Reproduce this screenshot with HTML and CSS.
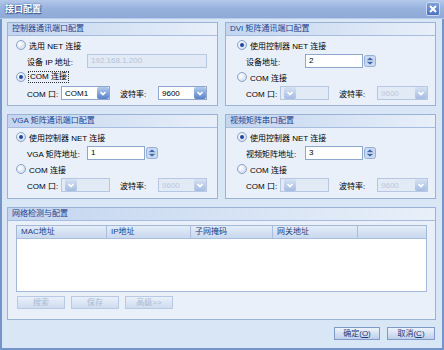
FILE: index.html
```html
<!DOCTYPE html>
<html lang="zh-CN">
<head>
    <meta charset="UTF-8">
    <title>接口配置</title>
    <link rel="stylesheet" href="styles.css">
</head>
<body>
<div class="window">
    <div class="titlebar">
        <span class="title">接口配置</span>
        <span class="close-btn">
            <svg width="12" height="12" viewBox="0 0 12 12"><path d="M3 3 L9 9 M9 3 L3 9" stroke="#fff" stroke-width="2"/></svg>
        </span>
    </div>
    <div class="frame">
        <div class="groups">
            <!-- 控制器 -->
            <div class="group">
                <div class="group-head">控制器通讯端口配置</div>
                <div class="group-body">
                    <div class="radio-row"><span class="radio"></span><span>选用 NET 连接</span></div>
                    <div class="field-row">
                        <span class="field-label">设备 IP 地址:</span>
                        <span class="textbox disabled wide">192.168.1.200</span>
                    </div>
                    <div class="radio-row"><span class="radio checked"></span><span class="focus">COM 连接</span></div>
                    <div class="field-row">
                        <span class="com-label">COM 口:</span>
                        <span class="combo">COM1<span class="drop"></span></span>
                        <span class="baud-label">波特率:</span>
                        <span class="combo">9600<span class="drop"></span></span>
                    </div>
                </div>
            </div>
            <!-- DVI -->
            <div class="group">
                <div class="group-head">DVI 矩阵通讯端口配置</div>
                <div class="group-body right">
                    <div class="radio-row"><span class="radio checked"></span><span>使用控制器 NET 连接</span></div>
                    <div class="field-row">
                        <span class="field-label">设备地址:</span>
                        <span class="textbox">2</span>
                        <span class="spin"></span>
                    </div>
                    <div class="radio-row"><span class="radio"></span><span>COM 连接</span></div>
                    <div class="field-row">
                        <span class="com-label">COM 口:</span>
                        <span class="combo disabled"><span class="drop"></span></span>
                        <span class="baud-label">波特率:</span>
                        <span class="combo disabled">9600<span class="drop"></span></span>
                    </div>
                </div>
            </div>
            <!-- VGA -->
            <div class="group">
                <div class="group-head">VGA 矩阵通讯端口配置</div>
                <div class="group-body">
                    <div class="radio-row"><span class="radio checked"></span><span>使用控制器 NET 连接</span></div>
                    <div class="field-row">
                        <span class="field-label">VGA 矩阵地址:</span>
                        <span class="textbox">1</span>
                        <span class="spin"></span>
                    </div>
                    <div class="radio-row"><span class="radio"></span><span>COM 连接</span></div>
                    <div class="field-row">
                        <span class="com-label">COM 口:</span>
                        <span class="combo disabled"><span class="drop"></span></span>
                        <span class="baud-label">波特率:</span>
                        <span class="combo disabled">9600<span class="drop"></span></span>
                    </div>
                </div>
            </div>
            <!-- 视频矩阵 -->
            <div class="group">
                <div class="group-head">视频矩阵串口配置</div>
                <div class="group-body right">
                    <div class="radio-row"><span class="radio checked"></span><span>使用控制器 NET 连接</span></div>
                    <div class="field-row">
                        <span class="field-label">视频矩阵地址:</span>
                        <span class="textbox">3</span>
                        <span class="spin"></span>
                    </div>
                    <div class="radio-row"><span class="radio"></span><span>COM 连接</span></div>
                    <div class="field-row">
                        <span class="com-label">COM 口:</span>
                        <span class="combo disabled"><span class="drop"></span></span>
                        <span class="baud-label">波特率:</span>
                        <span class="combo disabled">9600<span class="drop"></span></span>
                    </div>
                </div>
            </div>
        </div>

        <div class="group net-group">
            <div class="group-head">网络检测与配置</div>
            <div class="net-body">
                <div class="grid-table">
                    <div class="grid-head">
                        <span class="col c1">MAC地址</span>
                        <span class="col c2">IP地址</span>
                        <span class="col c3">子网掩码</span>
                        <span class="col c4">网关地址</span>
                        <span class="col c5"></span>
                    </div>
                </div>
                <div class="net-buttons">
                    <button class="btn" disabled>搜索</button>
                    <button class="btn" disabled>保存</button>
                    <button class="btn" disabled>高级&gt;&gt;</button>
                </div>
            </div>
        </div>

        <div class="footer">
            <button class="btn primary">确定(<u>O</u>)</button>
            <button class="btn primary cancel">取消(<u>C</u>)</button>
        </div>
    </div>
</div>
</body>
</html>
```

FILE: styles.css
```css
body {
    margin: 0;
    padding: 0;
    font-family: "Liberation Sans", "Noto Sans CJK SC", sans-serif;
    font-size: 8px;
    color: #000;
}

.window {
    width: 444px;
    height: 350px;
    display: flex;
    flex-direction: column;
    background-color: #d9e6f6;
}

.titlebar {
    height: 19px;
    box-sizing: border-box;
    display: flex;
    align-items: center;
    justify-content: space-between;
    padding: 0 4px 1px 5px;
    background: linear-gradient(to bottom, #b4c9ea 0%, #98b3de 45%, #8ea9d7 100%);
    border-bottom: 1px solid #b9cdea;
}

.title {
    color: #fff;
    font-weight: bold;
    font-size: 9px;
    text-shadow: 0 0 2px #34578f, 1px 1px 1px #34578f;
}

.close-btn {
    width: 12px;
    height: 12px;
    display: flex;
    background: linear-gradient(to bottom, #7fa1dc, #4b72bd);
    border: 1px solid #c8d8f0;
    border-radius: 2px;
}

.frame {
    flex: 1;
    display: flex;
    flex-direction: column;
    padding: 3px 6px 8px 5px;
    border: 2px solid #7594c9;
    border-top: none;
}

.groups {
    display: grid;
    grid-template-columns: 211px 211px;
    grid-template-rows: 84px 85px;
    column-gap: 7px;
    row-gap: 8px;
}

.group {
    box-sizing: border-box;
    border: 1px solid #9ab2d6;
    background-color: #e9f0fa;
    display: flex;
    flex-direction: column;
}

.group-head {
    height: 12px;
    line-height: 12px;
    padding-left: 4px;
    color: #21418e;
    background: linear-gradient(to right, #c3d5ef 0%, #d9e5f5 60%, #e8eff9 100%);
    border-bottom: 1px solid #a7bddf;
}

.group-body {
    display: flex;
    flex-direction: column;
    gap: 2px;
    padding: 2px 0 5px 8px;
}

.group-body.right {
    padding-left: 11px;
}

.radio-row {
    height: 14px;
    display: flex;
    align-items: center;
    gap: 3px;
}

.radio {
    width: 8px;
    height: 8px;
    border-radius: 50%;
    border: 1px solid #8aa3c8;
    background: radial-gradient(circle at 35% 35%, #ffffff, #c4d3e9);
    display: flex;
    align-items: center;
    justify-content: center;
}

.radio.checked::after {
    content: "";
    width: 4px;
    height: 4px;
    border-radius: 50%;
    background: #24469a;
}

.focus {
    outline: 1px dotted #333;
    padding: 0 1px;
    line-height: 10px;
}

.field-row {
    height: 14px;
    display: flex;
    align-items: center;
    padding-left: 11px;
}

.right .field-row {
    padding-left: 9px;
}

.field-label {
    width: 60px;
}

.right .field-label {
    width: 59px;
}

.com-label {
    width: 34px;
}

.baud-label {
    width: 38px;
    margin-left: 10px;
}

.textbox {
    box-sizing: border-box;
    width: 58px;
    height: 14px;
    line-height: 12px;
    padding-left: 3px;
    border: 1px solid #8ea8cc;
    background: #fff;
}

.textbox.wide {
    width: 120px;
}

.textbox.disabled {
    background: #e2eaf6;
    border-color: #b6c8e1;
    color: #b5c3d6;
}

.spin {
    width: 12px;
    height: 12px;
    margin-left: 1px;
    background:
        url("data:image/svg+xml,%3Csvg xmlns='http://www.w3.org/2000/svg' width='12' height='12'%3E%3Crect x='0.5' y='0.5' width='11' height='11' rx='2' fill='%23c9d9f1' stroke='%2397afd6'/%3E%3Cpath d='M3 5 L6 2.5 L9 5 Z' fill='%233d64a8'/%3E%3Crect x='2.5' y='5.6' width='7' height='0.8' fill='%2397afd6'/%3E%3Cpath d='M3 7 L6 9.5 L9 7 Z' fill='%233d64a8'/%3E%3C/svg%3E") no-repeat;
}

.combo {
    box-sizing: border-box;
    width: 49px;
    height: 14px;
    display: flex;
    align-items: center;
    justify-content: space-between;
    padding-left: 3px;
    padding-right: 0;
    border: 1px solid #8ea8cc;
    background: #fff;
}

.right .combo:last-child {
    width: 51px;
}

.combo.disabled {
    background: #e2eaf6;
    border-color: #b6c8e1;
    color: #bcc9db;
}

.drop {
    width: 12px;
    height: 12px;
    border-radius: 2px;
    background:
        url("data:image/svg+xml,%3Csvg xmlns='http://www.w3.org/2000/svg' width='12' height='12'%3E%3Cpath d='M3.5 5 L6 7.5 L8.5 5' fill='none' stroke='%23fff' stroke-width='1.7'/%3E%3C/svg%3E") no-repeat,
        linear-gradient(to bottom, #b3cbf0, #5a82c9);
}

.disabled .drop {
    background:
        url("data:image/svg+xml,%3Csvg xmlns='http://www.w3.org/2000/svg' width='12' height='12'%3E%3Cpath d='M3.5 5 L6 7.5 L8.5 5' fill='none' stroke='%23fff' stroke-width='1.7'/%3E%3C/svg%3E") no-repeat,
        linear-gradient(to bottom, #d6e2f3, #a5bce2);
}

.net-group {
    margin-top: 8px;
    height: 113px;
}

.net-body {
    padding: 4px 8px 0 8px;
}

.grid-table {
    box-sizing: border-box;
    height: 67px;
    border: 1px solid #a3b9da;
    background: #fff;
}

.grid-head {
    display: flex;
    height: 12px;
    background: linear-gradient(to bottom, #e4ecf8, #c8d8ee);
    border-bottom: 1px solid #a9bedd;
}

.col {
    box-sizing: border-box;
    line-height: 12px;
    padding-left: 4px;
    border-right: 1px solid #a9bedd;
    color: #24407f;
}

.c1 { width: 90px; }
.c2 { width: 84px; }
.c3 { width: 82px; }
.c4 { width: 85px; }
.c5 { flex: 1; border-right: none; }

.net-buttons {
    display: flex;
    gap: 6px;
    margin-top: 4px;
    padding-left: 1px;
}

.btn {
    box-sizing: border-box;
    width: 48px;
    height: 13px;
    padding: 0;
    font-family: inherit;
    font-size: 8px;
    line-height: 11px;
    border: 1px solid #b7c9e3;
    background: linear-gradient(to bottom, #e9f0fa, #cfdcef);
    color: #a9bad3;
}

.footer {
    display: flex;
    justify-content: flex-end;
    gap: 7px;
    margin-top: 7px;
    padding-right: 1px;
}

.btn.primary {
    width: 46px;
    border-color: #7f9bc8;
    background: linear-gradient(to bottom, #eef3fb, #bccfea);
    color: #1d3a7a;
}

.btn.cancel {
    width: 48px;
}
```
